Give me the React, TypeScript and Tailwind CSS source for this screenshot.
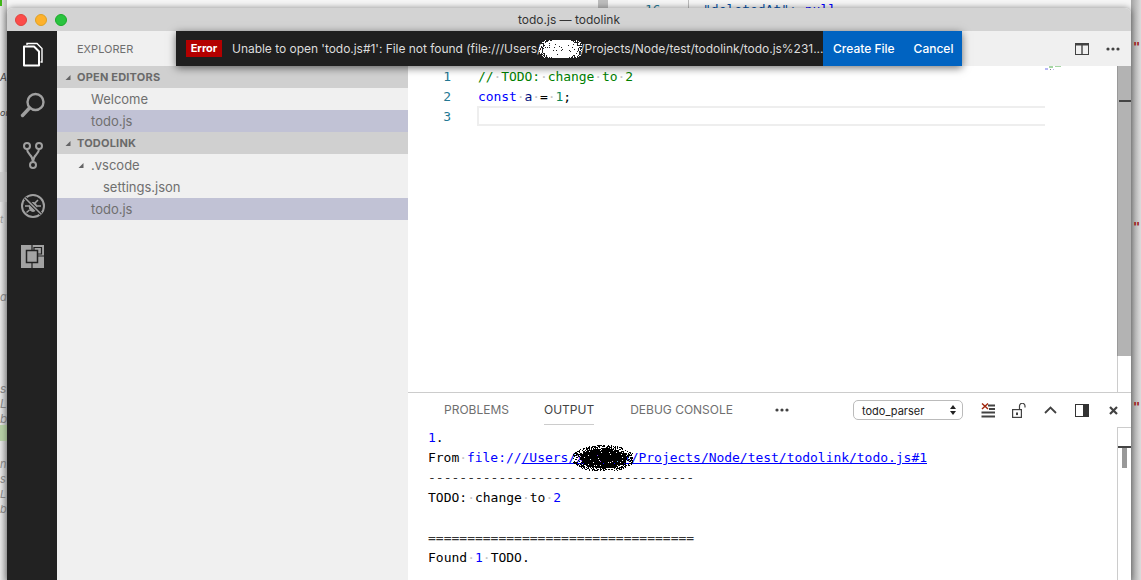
import React from "react";

const UI = "font-['Inter','Liberation_Sans',sans-serif]";
const MONO = "font-['DejaVu_Sans_Mono','Liberation_Mono',monospace]";

function Scribble({ w, h, color, seed }: { w: number; h: number; color: string; seed: number }) {
  const cells: React.ReactNode[] = [];
  let s = seed;
  const next = () => {
    s = (s * 16807) % 2147483647;
    return s / 2147483647;
  };
  for (let y = 0; y < h; y += 1) {
    for (let x = 0; x < w; x += 1) {
      const dx = (x - w / 2) / (w / 2);
      const dy = (y - h / 2) / (h / 2);
      const d = dx * dx + dy * dy;
      if (next() < (d < 0.6 ? 0.95 : d < 1.1 ? 0.5 : 0)) {
        cells.push(<rect key={`${x}-${y}`} x={x} y={y} width={1} height={1} fill={color} />);
      }
    }
  }
  return (
    <svg width={w} height={h} viewBox={`0 0 ${w} ${h}`} shapeRendering="crispEdges">
      {cells}
    </svg>
  );
}

const Sp = () => <span className="text-[#c4c4c4]">·</span>;

function Tri({ className = "" }: { className?: string }) {
  return (
    <svg width="7" height="7" viewBox="0 0 7 7" className={className}>
      <path d="M6.5 1 L6.5 6 L1.5 6 Z" fill="#646465" />
    </svg>
  );
}

function SectionHead({ label }: { label: string }) {
  return (
    <div className="h-[22px] bg-[#d0d0d0] flex items-center pl-[7px] gap-[6px]">
      <Tri className="shrink-0" />
      <span className="text-[11px] font-bold text-[#6a6a6a] tracking-[0.2px]">{label}</span>
    </div>
  );
}

function Row({ label, pad, active, tri }: { label: string; pad: string; active?: boolean; tri?: boolean }) {
  return (
    <div className={`h-[22px] flex items-center text-[13px] text-[#6f6f6f] ${pad} ${active ? "bg-[#c1c2d5]" : ""}`}>
      {tri && <Tri className="mr-[7px] shrink-0" />}
      <span className="pt-[2px]">{label}</span>
    </div>
  );
}

function FilesIcon() {
  return (
    <svg width="24" height="26" viewBox="0 0 24 26" fill="none">
      <path d="M6 3 V1.5 H16 L21 6.5 V20 H19.5" stroke="#fff" strokeWidth="1.4" />
      <path d="M3 4.5 H13 L18 9.5 V23.5 H3 Z" stroke="#fff" strokeWidth="2" fill="#222" strokeLinejoin="round" />
    </svg>
  );
}
function SearchIcon() {
  return (
    <svg width="26" height="26" viewBox="0 0 26 26" fill="none" stroke="#a0a0a0">
      <circle cx="15.5" cy="10" r="8" strokeWidth="2.4" />
      <path d="M9.5 16 L2.5 23.5" strokeWidth="3.4" strokeLinecap="round" />
    </svg>
  );
}
function GitIcon() {
  return (
    <svg width="20" height="27" viewBox="0 0 20 27" fill="none" stroke="#a0a0a0" strokeWidth="2">
      <circle cx="4" cy="4" r="3" />
      <circle cx="16" cy="4" r="3" />
      <circle cx="10" cy="23" r="3" />
      <path d="M4 7 C4 13 10 12 10 20 M16 7 C16 13 10 12 10 20" />
    </svg>
  );
}
function DebugIcon() {
  return (
    <svg width="26" height="26" viewBox="0 0 26 26" fill="none" stroke="#a0a0a0">
      <circle cx="13" cy="13" r="11" strokeWidth="2" />
      <ellipse cx="13" cy="14" rx="4.2" ry="5" fill="#a0a0a0" stroke="none" />
      <path d="M8 7 L11 10 M18 7 L15 10 M5 13 H9 M17 13 H21 M6.5 19.5 L9.5 17 M19.5 19.5 L16.5 17" strokeWidth="1.6" />
      <path d="M5 5 L21 21" stroke="#222" strokeWidth="3.4" />
      <path d="M5 5 L21 21" strokeWidth="1.6" />
    </svg>
  );
}
function ExtIcon() {
  return (
    <svg width="23" height="23" viewBox="0 0 23 23" fill="none">
      <rect width="23" height="23" fill="#a3a3a3" />
      <rect x="5.5" y="5.5" width="11" height="12" fill="#a3a3a3" stroke="#222" strokeWidth="1.5" />
      <path d="M11 0 V5.5 M11 17.5 V23 M0 0 M16.5 11 H23" stroke="#222" strokeWidth="1.2" />
      <path d="M13 5.5 V2.5 H20.5 V9 H16.5" stroke="#222" strokeWidth="1.2" />
    </svg>
  );
}

function Dots() {
  return (
    <svg width="14" height="4" viewBox="0 0 14 4" fill="#424242">
      <circle cx="2" cy="2" r="1.6" />
      <circle cx="7" cy="2" r="1.6" />
      <circle cx="12" cy="2" r="1.6" />
    </svg>
  );
}

function ClearIcon() {
  return (
    <svg width="14" height="15" viewBox="0 0 14 15" fill="none">
      <path d="M7 2.5 H14 M8 6 H14 M0.5 9.5 H14 M0.5 13.5 H14" stroke="#424242" strokeWidth="2" />
      <path d="M1 0.5 L7 6 M7 0.5 L1 6" stroke="#a1260d" strokeWidth="1.4" />
    </svg>
  );
}
function LockIcon() {
  return (
    <svg width="14" height="15" viewBox="0 0 14 15" fill="none" stroke="#424242" strokeWidth="1.2">
      <rect x="0.6" y="6.6" width="8.8" height="7.8" />
      <rect x="4" y="9.5" width="2" height="2.6" fill="#424242" stroke="none" />
      <path d="M7.5 6.5 V3 A2.6 2.6 0 0 1 13 3 V4.5" />
    </svg>
  );
}
function Chevron() {
  return (
    <svg width="13" height="8" viewBox="0 0 13 8" fill="none" stroke="#424242" strokeWidth="1.8">
      <path d="M1 7 L6.5 1.5 L12 7" />
    </svg>
  );
}
function PanelIcon() {
  return (
    <svg width="14" height="13" viewBox="0 0 14 13">
      <rect x="0.5" y="0.5" width="13" height="12" fill="#fff" stroke="#333" />
      <rect x="8" y="0.5" width="6" height="12" fill="#333" />
    </svg>
  );
}
function CloseIcon() {
  return (
    <svg width="9" height="9" viewBox="0 0 9 9" stroke="#424242" strokeWidth="2.2" fill="none">
      <path d="M1 1 L8 8 M8 1 L1 8" />
    </svg>
  );
}
function SplitIcon() {
  return (
    <svg width="14" height="12" viewBox="0 0 14 12">
      <rect x="0.5" y="0.5" width="13" height="11" fill="none" stroke="#424242" />
      <rect x="0" y="0" width="14" height="2.5" fill="#424242" />
      <rect x="6.3" y="0" width="1.4" height="12" fill="#424242" />
    </svg>
  );
}

function Backdrop() {
  return (
    <>
      <div className="absolute left-0 top-0 w-[7px] h-[580px] bg-gradient-to-r from-[#e6e6e6] to-[#bdbdbd]" />
      <div className="absolute left-0 top-[172px] w-[7px] h-[30px] bg-[#cfcfcf]" />
      <div className="absolute left-0 top-[425px] w-[7px] h-[16px] bg-[#b6cfa6]" />
      <div className="absolute left-0 top-0 w-[2px] h-[6px] bg-[#3fb618]" />
      <div className={`absolute left-0 top-[70px] text-[10px] text-[#444] italic ${UI}`}>A</div>
      <div className={`absolute left-0 top-[106px] text-[9px] text-[#444] italic ${UI}`}>or</div>
      <div className={`absolute left-0 top-[212px] text-[10px] text-[#999] italic ${UI}`}>t</div>
      <div className={`absolute left-0 top-[289px] text-[11px] text-[#888] italic ${UI}`}>a</div>
      <div className={`absolute left-0 top-[381px] flex flex-col text-[12px] leading-[15px] text-[#888] italic ${UI}`}>
        <span>s</span>
        <span>L</span>
        <span>b</span>
      </div>
      <div className={`absolute left-0 top-[457px] flex flex-col text-[11px] leading-[15px] text-[#888] italic ${UI}`}>
        <span>n</span>
        <span>s</span>
        <span>L</span>
        <span>b</span>
      </div>
      <div className="absolute left-[598px] top-0 w-[10px] h-[8px] bg-[#bdbdbd]" />
      <div className="absolute left-[688px] top-0 w-px h-[8px] bg-[#bbb]" />
      <div className={`absolute left-[645px] top-0 text-[13px] text-[#237893] ${MONO}`}>16</div>
      <div className={`absolute left-[703px] top-0 text-[13px] text-[#0451a5] ${MONO}`}>
        "deletedAt": <span className="text-[#0000ff]">null</span>
      </div>
      <div className="absolute right-0 top-0 w-[10px] h-[580px] bg-gradient-to-r from-[#a3a3a3] to-[#dcdcdc]" />
      <div className={`absolute left-[1133px] top-[38px] text-[12px] font-bold text-[#a31515] ${MONO}`}>"</div>
      <div className={`absolute left-[1133px] top-[218px] text-[12px] font-bold text-[#a31515] ${MONO}`}>"</div>
      <div className={`absolute left-[1133px] top-[398px] text-[12px] font-bold text-[#a31515] ${MONO}`}>"</div>
    </>
  );
}

function Notification() {
  return (
    <div className="absolute left-[169px] top-[23px] w-[786px] h-[35px] flex items-center bg-[#1f1f1f] shadow-[0_2px_8px_rgba(0,0,0,0.55)] z-10">
      <span className="ml-[10px] w-[36px] h-[17px] bg-[#b30000] text-white text-[11px] font-bold flex items-center justify-center shrink-0">
        Error
      </span>
      <div className="ml-[10px] w-[591px] text-[12px] tracking-[-0.03px] text-[#dcdcdc] whitespace-nowrap overflow-hidden flex items-center">
        <span>Unable to open 'todo.js#1': File not found (file:///Users/</span>
        <span className="relative w-[39px] h-[17px] shrink-0">
          <span className="absolute left-[-2px] top-[-4px]">
            <Scribble w={43} h={25} color="#ffffff" seed={12345} />
          </span>
        </span>
        <span>/Projects/Node/test/todolink/todo.js%231...</span>
      </div>
      <div className="flex-1 self-stretch bg-[#0063c1] flex items-center text-white text-[12px] font-medium">
        <span className="ml-[10px]">Create File</span>
        <span className="ml-[19px]">Cancel</span>
      </div>
    </div>
  );
}

function Output() {
  return (
    <div className={`pl-[20px] pt-[1px] text-[13px] leading-[20px] text-black whitespace-pre ${MONO}`}>
      <div>
        <span className="text-[#0000ff]">1</span>.
      </div>
      <div className="tracking-[-0.03px]">
        From
        <Sp />
        <span className="text-[#0000ff]">file://</span>
        <span className="text-[#0000ff] underline">
          /Users/
          <span className="relative">
            xxxxxxx
            <span className="absolute left-[-3px] top-[-5px]">
              <Scribble w={60} h={26} color="#000000" seed={777} />
            </span>
          </span>
          /Projects/Node/test/todolink/todo.js#1
        </span>
      </div>
      <div className="text-[#333]">----------------------------------</div>
      <div>
        TODO:
        <Sp />
        change
        <Sp />
        to
        <Sp />
        <span className="text-[#0000ff]">2</span>
      </div>
      <div>&nbsp;</div>
      <div className="text-[#333]">==================================</div>
      <div>
        Found
        <Sp />
        <span className="text-[#0000ff]">1</span>
        <Sp />
        TODO.
      </div>
    </div>
  );
}

export default function App() {
  return (
    <div className={`relative w-[1141px] h-[580px] overflow-hidden bg-[#f5f5f5] pl-[7px] pt-[8px] ${UI}`}>
      <Backdrop />
      <div className="relative w-[1124px] h-[572px] flex flex-col rounded-t-[6px] shadow-[0_0_6px_rgba(0,0,0,0.45)]">
        <div className="relative h-[23px] shrink-0 bg-[#d3d3d3] rounded-t-[6px] flex items-center justify-center text-[12px] text-[#333]">
          <div className="absolute left-[8px] top-[6px] flex gap-[8px]">
            <span className="w-[12px] h-[12px] rounded-full bg-[#fc4c4a] border border-[#e0443e]" />
            <span className="w-[12px] h-[12px] rounded-full bg-[#fdb12c] border border-[#dea123]" />
            <span className="w-[12px] h-[12px] rounded-full bg-[#2ac33f] border border-[#1aab29]" />
          </div>
          todo.js — todolink
        </div>

        <div className="flex-1 flex min-h-0">
          <div className="w-[50px] shrink-0 bg-[#222222] flex flex-col items-center pl-[1px]">
            <div className="h-[50px] flex items-center justify-center mt-[-1px]"><FilesIcon /></div>
            <div className="h-[50px] flex items-center justify-center"><SearchIcon /></div>
            <div className="h-[50px] flex items-center justify-center"><GitIcon /></div>
            <div className="h-[51px] flex items-center justify-center"><DebugIcon /></div>
            <div className="h-[50px] flex items-center justify-center"><ExtIcon /></div>
          </div>

          <div className="w-[351px] shrink-0 bg-[#f0f0f0] flex flex-col">
            <div className="h-[35px] flex items-center pl-[20px] text-[11px] text-[#6f6f6f]">
              <span className="pt-[2px]">EXPLORER</span>
            </div>
            <SectionHead label="OPEN EDITORS" />
            <Row label="Welcome" pad="pl-[34px]" />
            <Row label="todo.js" pad="pl-[34px]" active />
            <SectionHead label="TODOLINK" />
            <Row label=".vscode" pad="pl-[20px]" tri />
            <Row label="settings.json" pad="pl-[46px]" />
            <Row label="todo.js" pad="pl-[34px]" active />
          </div>

          <div className="flex-1 min-w-0 flex flex-col bg-white">
            <div className="h-[35px] shrink-0 bg-[#f0f0f0] flex items-center pr-[11px]">
              <div className="flex-1" />
              <SplitIcon />
              <div className="w-[17px]" />
              <Dots />
            </div>

            <div className="relative h-[326px] shrink-0 flex">
              <div className={`w-[43px] shrink-0 pt-[1px] text-right text-[13px] leading-[20px] text-[#237893] ${MONO}`}>
                <div>1</div>
                <div>2</div>
                <div>3</div>
              </div>
              <div className="w-[27px] shrink-0" />
              <div className={`w-[567px] shrink-0 pt-[1px] text-[13px] leading-[20px] tracking-[-0.08px] whitespace-pre ${MONO}`}>
                <div className="text-[#008000]">
                  //<Sp />TODO:<Sp />change<Sp />to<Sp />2
                </div>
                <div>
                  <span className="text-[#0000ff]">const</span>
                  <Sp />
                  <span className="text-[#001080]">a</span>
                  <Sp />=<Sp />
                  <span className="text-[#09885a]">1</span>;
                </div>
                <div className="h-[20px] mt-[-1px] ml-[-1px] border-y-2 border-l-2 border-[#eeeeee]" />
              </div>
              <div className="w-[20px] shrink-0">
                <svg width="20" height="5" viewBox="0 0 20 5" shapeRendering="crispEdges">
                  <rect x="0" y="2" width="3" height="2" fill="#b9b9f5" />
                  <rect x="4" y="0" width="4" height="2" fill="#a5d6a5" />
                  <rect x="10" y="0" width="6" height="1" fill="#a5d6a5" />
                  <rect x="5" y="3" width="1" height="1" fill="#888" />
                  <rect x="8" y="3" width="1" height="1" fill="#b9b9f5" />
                </svg>
              </div>
              <div className="flex-1" />
              <div className="w-[14px] shrink-0 border-l border-[#cccccc] flex flex-col">
                <div className="relative h-[290px] bg-[#b3b3b3] border-l border-[#999999] ml-[-1px]">
                  <div className="absolute left-[1px] right-0 top-[34px] h-[2px] bg-[#444444]" />
                </div>
              </div>
            </div>

            <div className="flex-1 min-h-0 border-t border-[#cccccc] flex flex-col">
              <div className="relative h-[34px] shrink-0 flex items-center text-[12px] text-[#6f6f6f]">
                <span className="ml-[36px]">PROBLEMS</span>
                <span className="relative ml-[35px] text-[#424242]">
                  OUTPUT
                  <span className="absolute left-0 right-0 top-[23px] h-px bg-[#cccccc]" />
                </span>
                <span className="ml-[36px]">DEBUG CONSOLE</span>
                <span className="ml-[42px]"><Dots /></span>
                <div className="ml-[64px] w-[110px] h-[20px] border border-[#bbbbbb] rounded-[5px] flex items-center pl-[8px] pr-[6px] text-[11px] text-[#222] bg-white">
                  <span className="flex-1 pt-[2px]">todo_parser</span>
                  <svg width="6" height="10" viewBox="0 0 6 10" fill="#222">
                    <path d="M3 0 L6 4 H0 Z M0 6 H6 L3 10 Z" />
                  </svg>
                </div>
                <div className="flex-1 flex items-center">
                  <div className="ml-[18px] w-[14px] flex justify-center"><ClearIcon /></div>
                  <div className="ml-[17px] w-[14px] flex justify-center"><LockIcon /></div>
                  <div className="ml-[17px] w-[14px] flex justify-center"><Chevron /></div>
                  <div className="ml-[18px] w-[14px] flex justify-center"><PanelIcon /></div>
                  <div className="ml-[17px] w-[14px] flex justify-center"><CloseIcon /></div>
                </div>
              </div>
              <div className="flex-1 min-h-0 flex">
                <div className="flex-1 min-w-0 overflow-hidden"><Output /></div>
                <div className="w-[14px] shrink-0 border-l border-t border-[#cccccc] relative">
                  <div className="absolute left-0 right-0 top-[18px] h-[2px] bg-[#444444]" />
                  <div className="absolute left-[4px] w-[5px] top-[20px] h-[20px] bg-[#999999]" />
                </div>
              </div>
            </div>
          </div>
        </div>
        <Notification />
      </div>
    </div>
  );
}
